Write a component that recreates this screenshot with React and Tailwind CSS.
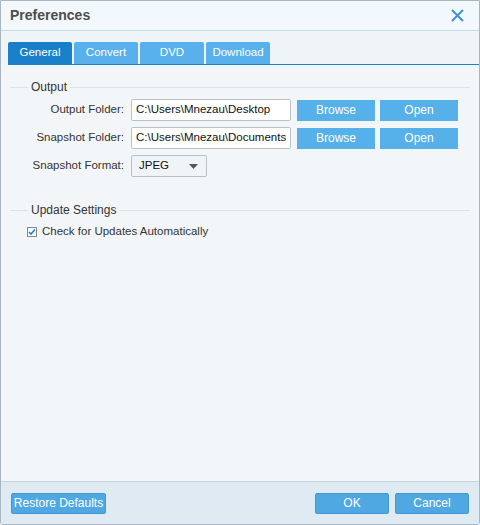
import React from "react";

const font = { fontFamily: '"Liberation Sans", Arial, sans-serif' };

function GroupTitle({ children }) {
  return (
    <div className="flex items-center h-[14px]">
      <div className="w-[18px] h-px bg-[#dfe4e9]" />
      <div className="px-[3px] text-[12px] text-[#333] leading-none">{children}</div>
      <div className="flex-1 h-px bg-[#dfe4e9]" />
    </div>
  );
}

function BlueBtn({ children, w }) {
  return (
    <div className={`${w} h-[21px] bg-[#56b0ea] text-white text-[12px] flex items-center justify-center`}>
      {children}
    </div>
  );
}

function FooterBtn({ children, w }) {
  return (
    <div className={`${w} h-[21px] bg-[#4fa8e2] border border-[#3f99d6] rounded-[2px] text-white text-[12px] flex items-center justify-center`}>
      {children}
    </div>
  );
}

export default function App() {
  return (
    <div
      style={font}
      className="w-[480px] h-[525px] flex flex-col border border-[#a6b6c3] rounded-b-[3px] overflow-hidden bg-[#eef4f8]"
    >
      {/* title bar */}
      <div className="h-[30px] shrink-0 bg-[#f2f8fc] border-b border-[#c5dbe8] flex items-center justify-between pl-[9px] pr-[15px]">
        <div className="text-[14px] font-bold text-[#4d4d4d]">Preferences</div>
        <svg width="13" height="13" viewBox="0 0 13 13">
          <path d="M1 1 L12 12 M12 1 L1 12" stroke="#3d93d2" strokeWidth="2" />
        </svg>
      </div>

      {/* tabs */}
      <div className="shrink-0 pt-[11px] pl-[7px]">
        <div className="flex gap-[2px] border-b border-[#1a7fc9] h-[23px] text-[11.5px]">
          <div className="w-[64px] h-[22px] bg-[#1a7fc9] text-white flex items-center justify-center rounded-t-[2px]">General</div>
          <div className="w-[64px] h-[22px] bg-[#58b1ec] text-white flex items-center justify-center rounded-t-[2px]">Convert</div>
          <div className="w-[64px] h-[22px] bg-[#58b1ec] text-white flex items-center justify-center rounded-t-[2px]">DVD</div>
          <div className="w-[64px] h-[22px] bg-[#58b1ec] text-white flex items-center justify-center rounded-t-[2px]">Download</div>
        </div>
      </div>

      {/* content */}
      <div className="flex-1 bg-[#f3f6f9] pt-[15px] pl-[9px] pr-[9px]">
        <GroupTitle>Output</GroupTitle>
        <div className="mt-[5px] flex flex-col gap-[6px] text-[11.5px] text-[#333]">
          <div className="flex items-center h-[22px]">
            <div className="w-[114px] text-right">Output Folder:</div>
            <div className="ml-[7px] w-[160px] h-[22px] bg-white border border-[#b9c0c6] rounded-[2px] flex items-center px-[4px] overflow-hidden whitespace-nowrap text-[#111]">
              C:\Users\Mnezau\Desktop
            </div>
            <div className="ml-[6px]"><BlueBtn w="w-[78px]">Browse</BlueBtn></div>
            <div className="ml-[5px]"><BlueBtn w="w-[78px]">Open</BlueBtn></div>
          </div>
          <div className="flex items-center h-[22px]">
            <div className="w-[114px] text-right">Snapshot Folder:</div>
            <div className="ml-[7px] w-[160px] h-[22px] bg-white border border-[#b9c0c6] rounded-[2px] flex items-center px-[4px] overflow-hidden whitespace-nowrap text-[#111]">
              <span className="block w-[150px] overflow-hidden">C:\Users\Mnezau\Documents\4V</span>
            </div>
            <div className="ml-[6px]"><BlueBtn w="w-[78px]">Browse</BlueBtn></div>
            <div className="ml-[5px]"><BlueBtn w="w-[78px]">Open</BlueBtn></div>
          </div>
          <div className="flex items-center h-[22px]">
            <div className="w-[114px] text-right">Snapshot Format:</div>
            <div className="ml-[7px] w-[76px] h-[22px] bg-[#f1f4f7] border border-[#b9c0c6] rounded-[2px] flex items-center justify-between pl-[7px] pr-[8px] text-[#111]">
              <span>JPEG</span>
              <svg width="9" height="5" viewBox="0 0 9 5"><path d="M0 0 H9 L4.5 5 Z" fill="#555" /></svg>
            </div>
          </div>
        </div>

        <div className="mt-[26px]">
          <GroupTitle>Update Settings</GroupTitle>
        </div>
        <div className="mt-[6px] ml-[17px] flex items-center gap-[5px] text-[11.5px] text-[#333]">
          <div className="w-[10px] h-[10px] border border-[#7f8a94] bg-white flex items-center justify-center">
            <svg width="8" height="8" viewBox="0 0 8 8"><path d="M1 4 L3 6 L7 1.5" stroke="#1a7fc9" strokeWidth="1.6" fill="none" /></svg>
          </div>
          <span>Check for Updates Automatically</span>
        </div>
      </div>

      {/* footer */}
      <div className="h-[43px] shrink-0 bg-[#dfeaf2] border-t border-[#c3d3df] flex items-center justify-between px-[10px]">
        <FooterBtn w="w-[95px]">Restore Defaults</FooterBtn>
        <div className="flex gap-[6px]">
          <FooterBtn w="w-[74px]">OK</FooterBtn>
          <FooterBtn w="w-[74px]">Cancel</FooterBtn>
        </div>
      </div>
    </div>
  );
}
